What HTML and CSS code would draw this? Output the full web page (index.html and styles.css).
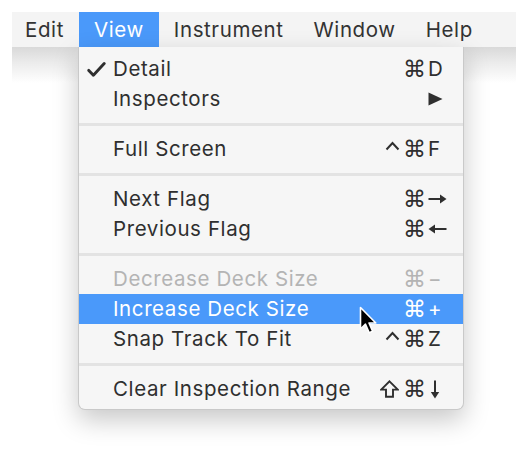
FILE: index.html
```html
<!DOCTYPE html>
<html>
<head>
<meta charset="utf-8">
<link rel="stylesheet" href="styles.css">
</head>
<body>
<div class="screen">
  <div class="menubar">
    <span class="mb-item first">Edit</span>
    <span class="mb-item active">View</span>
    <span class="mb-item">Instrument</span>
    <span class="mb-item">Window</span>
    <span class="mb-item">Help</span>
  </div>
  <div class="shade"></div>

  <div class="menu">
    <div class="row">
      <span class="check"><svg width="19" height="15" viewBox="0 0 19 15"><path d="M1.8 8.4 L6.4 13.2 L17.2 1.6" fill="none" stroke="currentColor" stroke-width="2.9" stroke-linecap="round" stroke-linejoin="round"/></svg></span>
      <span class="label">Detail</span>
      <span class="mods"><span class="cmd">⌘</span></span>
      <span class="key">D</span>
    </div>
    <div class="row">
      <span class="check"></span>
      <span class="label">Inspectors</span>
      <span class="mods"></span>
      <span class="key"><svg class="ico" width="15" height="14" viewBox="0 0 15 14"><path d="M0.5 0.5 L14.5 7 L0.5 13.5 Z" fill="currentColor"/></svg></span>
    </div>
    <div class="sep"></div>
    <div class="row">
      <span class="check"></span>
      <span class="label">Full Screen</span>
      <span class="mods"><svg class="ctrl" width="15" height="10" viewBox="0 0 15 10"><path d="M1.5 8.5 L7.5 2 L13.5 8.5" fill="none" stroke="currentColor" stroke-width="2" stroke-linejoin="miter"/></svg><span class="cmd">⌘</span></span>
      <span class="key">F</span>
    </div>
    <div class="sep"></div>
    <div class="row">
      <span class="check"></span>
      <span class="label">Next Flag</span>
      <span class="mods"><span class="cmd">⌘</span></span>
      <span class="key"><svg class="ico" width="19" height="12" viewBox="0 0 19 12"><path d="M0.5 6 H16" fill="none" stroke="currentColor" stroke-width="2"/><path d="M12 1.5 L18.5 6 L12 10.5 Z" fill="currentColor"/></svg></span>
    </div>
    <div class="row">
      <span class="check"></span>
      <span class="label">Previous Flag</span>
      <span class="mods"><span class="cmd">⌘</span></span>
      <span class="key"><svg class="ico" width="19" height="12" viewBox="0 0 19 12"><path d="M3 6 H18.5" fill="none" stroke="currentColor" stroke-width="2"/><path d="M7 1.5 L0.5 6 L7 10.5 Z" fill="currentColor"/></svg></span>
    </div>
    <div class="sep"></div>
    <div class="row disabled">
      <span class="check"></span>
      <span class="label">Decrease Deck Size</span>
      <span class="mods"><span class="cmd">⌘</span></span>
      <span class="key">−</span>
    </div>
    <div class="row selected">
      <span class="check"></span>
      <span class="label">Increase Deck Size</span>
      <span class="mods"><span class="cmd">⌘</span></span>
      <span class="key">+</span>
    </div>
    <div class="row">
      <span class="check"></span>
      <span class="label">Snap Track To Fit</span>
      <span class="mods"><svg class="ctrl" width="15" height="10" viewBox="0 0 15 10"><path d="M1.5 8.5 L7.5 2 L13.5 8.5" fill="none" stroke="currentColor" stroke-width="2" stroke-linejoin="miter"/></svg><span class="cmd">⌘</span></span>
      <span class="key">Z</span>
    </div>
    <div class="sep"></div>
    <div class="row">
      <span class="check"></span>
      <span class="label">Clear Inspection Range</span>
      <span class="mods"><svg class="shift" width="19" height="18" viewBox="0 0 19 18"><path d="M9.5 1.3 L17.8 9.6 L13 9.6 L13 16.8 L6 16.8 L6 9.6 L1.2 9.6 Z" fill="none" stroke="currentColor" stroke-width="1.9" stroke-linejoin="miter"/></svg><span class="cmd">⌘</span></span>
      <span class="key"><svg class="ico arrow-down" width="10" height="19" viewBox="0 0 10 19"><path d="M5 0.5 V15" fill="none" stroke="currentColor" stroke-width="2"/><path d="M0.8 12 L5 18.5 L9.2 12 Z" fill="currentColor"/></svg></span>
    </div>
  </div>

  <svg class="cursor" width="20" height="30" viewBox="0 0 20 30">
    <path d="M1.5 1.5 L1.5 23 L6.5 18.2 L10.2 26.8 L13.6 25.3 L10 17 L16.8 17 Z" fill="#000" stroke="#fff" stroke-width="1.6" stroke-linejoin="round"/>
  </svg>
</div>
</body>
</html>
```

FILE: styles.css
```css
html, body {
  margin: 0;
  padding: 0;
  background: #ffffff;
}

body {
  font-family: "Inter", "Roboto", "Liberation Sans", sans-serif;
  color: #333333;
  width: 529px;
  height: 452px;
  overflow: hidden;
}

.screen {
  position: relative;
  padding: 12px 13px 0 12px;
}

.menubar {
  display: flex;
  height: 35px;
  background: #f4f4f4;
  font-size: 20.5px;
  letter-spacing: 0.6px;
  line-height: 35px;
}

.mb-item {
  padding: 0 15px;
  color: #333;
}

.mb-item.first {
  padding-left: 13px;
}

.mb-item.active {
  background: #4a99fa;
  color: #ffffff;
}

.shade {
  height: 36px;
  background: linear-gradient(to bottom, #d9d9d9 0%, #ececec 45%, #ffffff 100%);
}

.menu {
  position: absolute;
  left: 78px;
  top: 47px;
  width: 384px;
  padding: 7px 0 5px;
  background: #f6f6f6;
  border: 1px solid #c9c9c9;
  border-top: none;
  border-radius: 0 0 7px 7px;
  box-shadow: 0 10px 26px rgba(0, 0, 0, 0.22);
  font-size: 20.5px;
  letter-spacing: 0.6px;
}

.row {
  display: grid;
  grid-template-columns: 34px 1fr auto 35px;
  align-items: center;
  height: 30px;
  line-height: 30px;
  color: #2f2f2f;
}

.check {
  display: flex;
  justify-content: flex-start;
  padding-left: 8px;
  align-items: center;
}

.check svg {
  display: block;
}

.mods {
  display: flex;
  align-items: center;
  justify-content: flex-end;
  gap: 3px;
  padding-right: 2px;
}

.cmd {
  font-family: "DejaVu Sans", sans-serif;
  font-size: 23px;
  letter-spacing: 0;
  line-height: 30px;
}

.ctrl {
  display: block;
  margin-top: -6px;
}

.shift {
  display: block;
  margin-right: 1px;
}

.key {
  display: flex;
  align-items: center;
  padding-left: 0;
}

.ico {
  display: block;
}

.arrow-down {
  margin-left: 2px;
}

.row.disabled {
  color: #b4b4b4;
}

.row.selected {
  background: #4a99fa;
  color: #ffffff;
}

.sep {
  height: 20px;
  display: flex;
  align-items: center;
}

.sep::before {
  content: "";
  display: block;
  width: 100%;
  height: 3px;
  background: #e3e3e3;
}

.cursor {
  position: absolute;
  left: 359px;
  top: 306px;
}
```
